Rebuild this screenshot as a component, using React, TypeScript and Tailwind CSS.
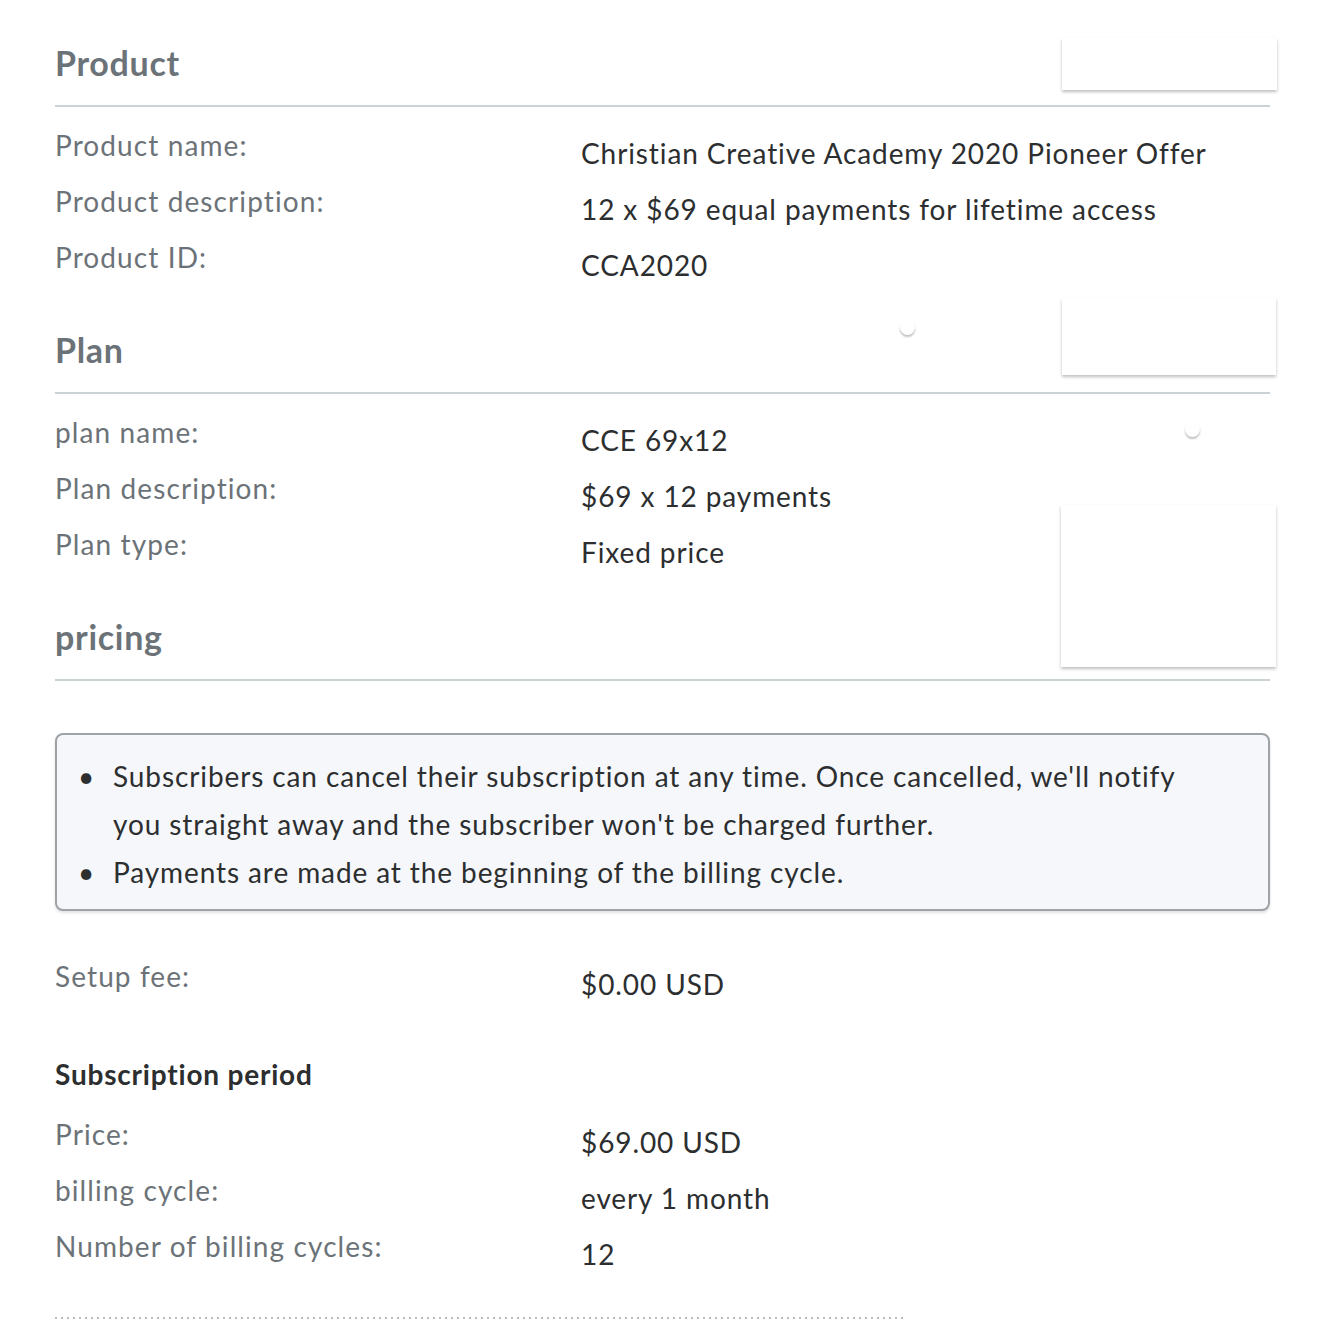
import React from "react";

const font = { fontFamily: "Lato, 'Open Sans', sans-serif" };

type Row = { label: string; value: string };

const productRows: Row[] = [
  { label: "Product name:", value: "Christian Creative Academy 2020 Pioneer Offer" },
  { label: "Product description:", value: "12 x $69 equal payments for lifetime access" },
  { label: "Product ID:", value: "CCA2020" },
];

const planRows: Row[] = [
  { label: "plan name:", value: "CCE 69x12" },
  { label: "Plan description:", value: "$69 x 12 payments" },
  { label: "Plan type:", value: "Fixed price" },
];

const periodRows: Row[] = [
  { label: "Price:", value: "$69.00 USD" },
  { label: "billing cycle:", value: "every 1 month" },
  { label: "Number of billing cycles:", value: "12" },
];

function DetailRow({ label, value }: Row) {
  return (
    <div className="grid grid-cols-[526px_1fr] h-[56px]">
      <div className="text-[28px] leading-[40px] text-[#6c7378] tracking-[1.1px]">{label}</div>
      <div className="pt-[8px] text-[28px] leading-[40px] text-[#2c2e2f] tracking-[0.9px]">{value}</div>
    </div>
  );
}

function SectionHeading({ title }: { title: string }) {
  return (
    <div className="border-b-2 border-[#cbd2d6] pb-[20px]">
      <h2 className="text-[34px] leading-[44px] font-bold text-[#6c7378] tracking-[0.7px]">{title}</h2>
    </div>
  );
}

export default function App() {
  return (
    <div className="relative min-h-[1324px] bg-white overflow-hidden" style={font}>
      <div className="pl-[55px] pr-[64px] pt-[41px]">
        {/* Product */}
        <SectionHeading title="Product" />
        <div className="pt-[18px] pb-[35px]">
          {productRows.map((r) => (
            <DetailRow key={r.label} {...r} />
          ))}
        </div>

        {/* Plan */}
        <SectionHeading title="Plan" />
        <div className="pt-[18px] pb-[35px]">
          {planRows.map((r) => (
            <DetailRow key={r.label} {...r} />
          ))}
        </div>

        {/* Pricing */}
        <SectionHeading title="pricing" />

        <div className="mt-[52px] rounded-[8px] border-2 border-[#9da3a6] bg-[#f5f7fa] pt-[17px] pb-[13px] pl-[21px] pr-[56px] shadow-[0_2px_3px_rgba(0,0,0,0.12)]">
          <ul className="text-[28px] leading-[48px] text-[#2c2e2f] tracking-[0.9px]">
            <li className="flex">
              <span className="w-[35px] shrink-0">•</span>
              <span>
                Subscribers can cancel their subscription at any time. Once cancelled, we'll notify you straight away
                and the subscriber won't be charged further.
              </span>
            </li>
            <li className="flex">
              <span className="w-[35px] shrink-0">•</span>
              <span>Payments are made at the beginning of the billing cycle.</span>
            </li>
          </ul>
        </div>

        <div className="mt-[45px]">
          <DetailRow label="Setup fee:" value="$0.00 USD" />
        </div>

        <h3 className="mt-[42px] text-[28px] leading-[40px] font-bold text-[#2c2e2f] tracking-[0.8px]">
          Subscription period
        </h3>
        <div className="pt-[20px]">
          {periodRows.map((r) => (
            <DetailRow key={r.label} {...r} />
          ))}
        </div>

        <div className="mt-[35px] w-[850px] h-[2px] bg-[linear-gradient(to_right,#b7bcbf_2px,transparent_2px)] bg-[length:6px_2px]" />
      </div>

      {/* floating blank cards over the right side */}
      <div className="absolute left-[1062px] top-[38px] w-[215px] h-[52px] bg-white shadow-[0_2px_3px_rgba(0,0,0,0.25)]" />
      <div className="absolute left-[1062px] top-[298px] w-[214px] h-[77px] bg-white shadow-[0_2px_3px_rgba(0,0,0,0.25)]" />
      <div className="absolute left-[1061px] top-[505px] w-[215px] h-[162px] bg-white shadow-[0_2px_3px_rgba(0,0,0,0.25)]" />
      <div className="absolute left-[900px] top-[320px] w-[15px] h-[15px] rounded-full bg-white shadow-[0_2px_2px_rgba(0,0,0,0.25)]" />
      <div className="absolute left-[1185px] top-[422px] w-[15px] h-[15px] rounded-full bg-white shadow-[0_2px_2px_rgba(0,0,0,0.25)]" />
    </div>
  );
}
